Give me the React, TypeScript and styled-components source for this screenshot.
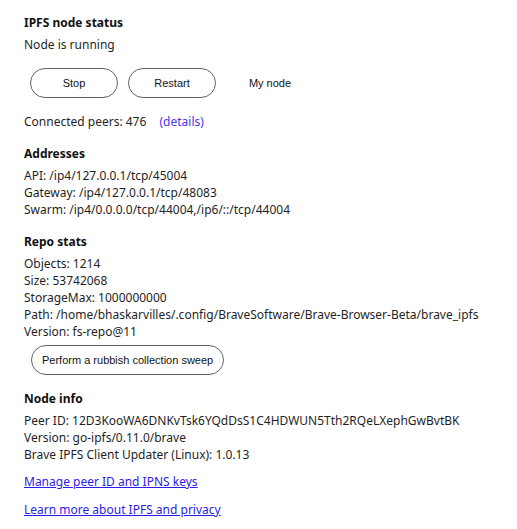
import React from "react";
import styled, { createGlobalStyle } from "styled-components";

const Global = createGlobalStyle`
  html, body { margin: 0; padding: 0; background: #ffffff; }
  body { font-family: "Noto Sans", "Open Sans", sans-serif; color: #1f1f1f; }
`;

const Page = styled.div`
  padding: 14px 24px 12px 24px;
  font-size: 12px;
  line-height: 17px;
`;

const Section = styled.section<{ $gap?: number }>`
  margin-top: ${(p) => (p.$gap ?? 15)}px;
  &:first-child { margin-top: 0; }
`;

const Heading = styled.div`
  font-weight: 700;
  color: #111;
  margin-bottom: 5px;
`;

const Line = styled.div`
  white-space: nowrap;
`;

const ButtonRow = styled.div`
  display: flex;
  gap: 10px;
  margin: 15px 0 15px 6px;
`;

const PillButton = styled.button<{ $plain?: boolean }>`
  font-family: "Liberation Sans", Arial, sans-serif;
  font-size: 11px;
  color: #111;
  background: #fff;
  border: 1px solid ${(p) => (p.$plain ? "transparent" : "#5f6368")};
  border-radius: 15px;
  height: 30px;
  min-width: 88px;
  padding: 0 10px;
  cursor: pointer;
`;

const SweepRow = styled.div`
  margin: 5px 0 0 7px;
`;

const Details = styled.a`
  color: #4736ee;
  text-decoration: none;
  margin-left: 10px;
`;

const LinkLine = styled.div<{ $gap: number }>`
  margin-top: ${(p) => p.$gap}px;
`;

const Link = styled.a`
  color: #2b1de6;
  text-decoration: underline;
`;

export default function App() {
  return (
    <Page>
      <Global />
      <Section>
        <Heading>IPFS node status</Heading>
        <Line>Node is running</Line>
        <ButtonRow>
          <PillButton>Stop</PillButton>
          <PillButton>Restart</PillButton>
          <PillButton $plain>My node</PillButton>
        </ButtonRow>
        <Line>
          Connected peers: 476 <Details href="#">(details)</Details>
        </Line>
      </Section>
      <Section>
        <Heading>Addresses</Heading>
        <Line>API: /ip4/127.0.0.1/tcp/45004</Line>
        <Line>Gateway: /ip4/127.0.0.1/tcp/48083</Line>
        <Line>Swarm: /ip4/0.0.0.0/tcp/44004,/ip6/::/tcp/44004</Line>
      </Section>
      <Section>
        <Heading>Repo stats</Heading>
        <Line>Objects: 1214</Line>
        <Line>Size: 53742068</Line>
        <Line>StorageMax: 1000000000</Line>
        <Line>Path: /home/bhaskarvilles/.config/BraveSoftware/Brave-Browser-Beta/brave_ipfs</Line>
        <Line>Version: fs-repo@11</Line>
        <SweepRow>
          <PillButton>Perform a rubbish collection sweep</PillButton>
        </SweepRow>
      </Section>
      <Section>
        <Heading>Node info</Heading>
        <Line>Peer ID: 12D3KooWA6DNKvTsk6YQdDsS1C4HDWUN5Tth2RQeLXephGwBvtBK</Line>
        <Line>Version: go-ipfs/0.11.0/brave</Line>
        <Line>Brave IPFS Client Updater (Linux): 1.0.13</Line>
        <LinkLine $gap={10}>
          <Link href="#">Manage peer ID and IPNS keys</Link>
        </LinkLine>
        <LinkLine $gap={11}>
          <Link href="#">Learn more about IPFS and privacy</Link>
        </LinkLine>
      </Section>
    </Page>
  );
}
